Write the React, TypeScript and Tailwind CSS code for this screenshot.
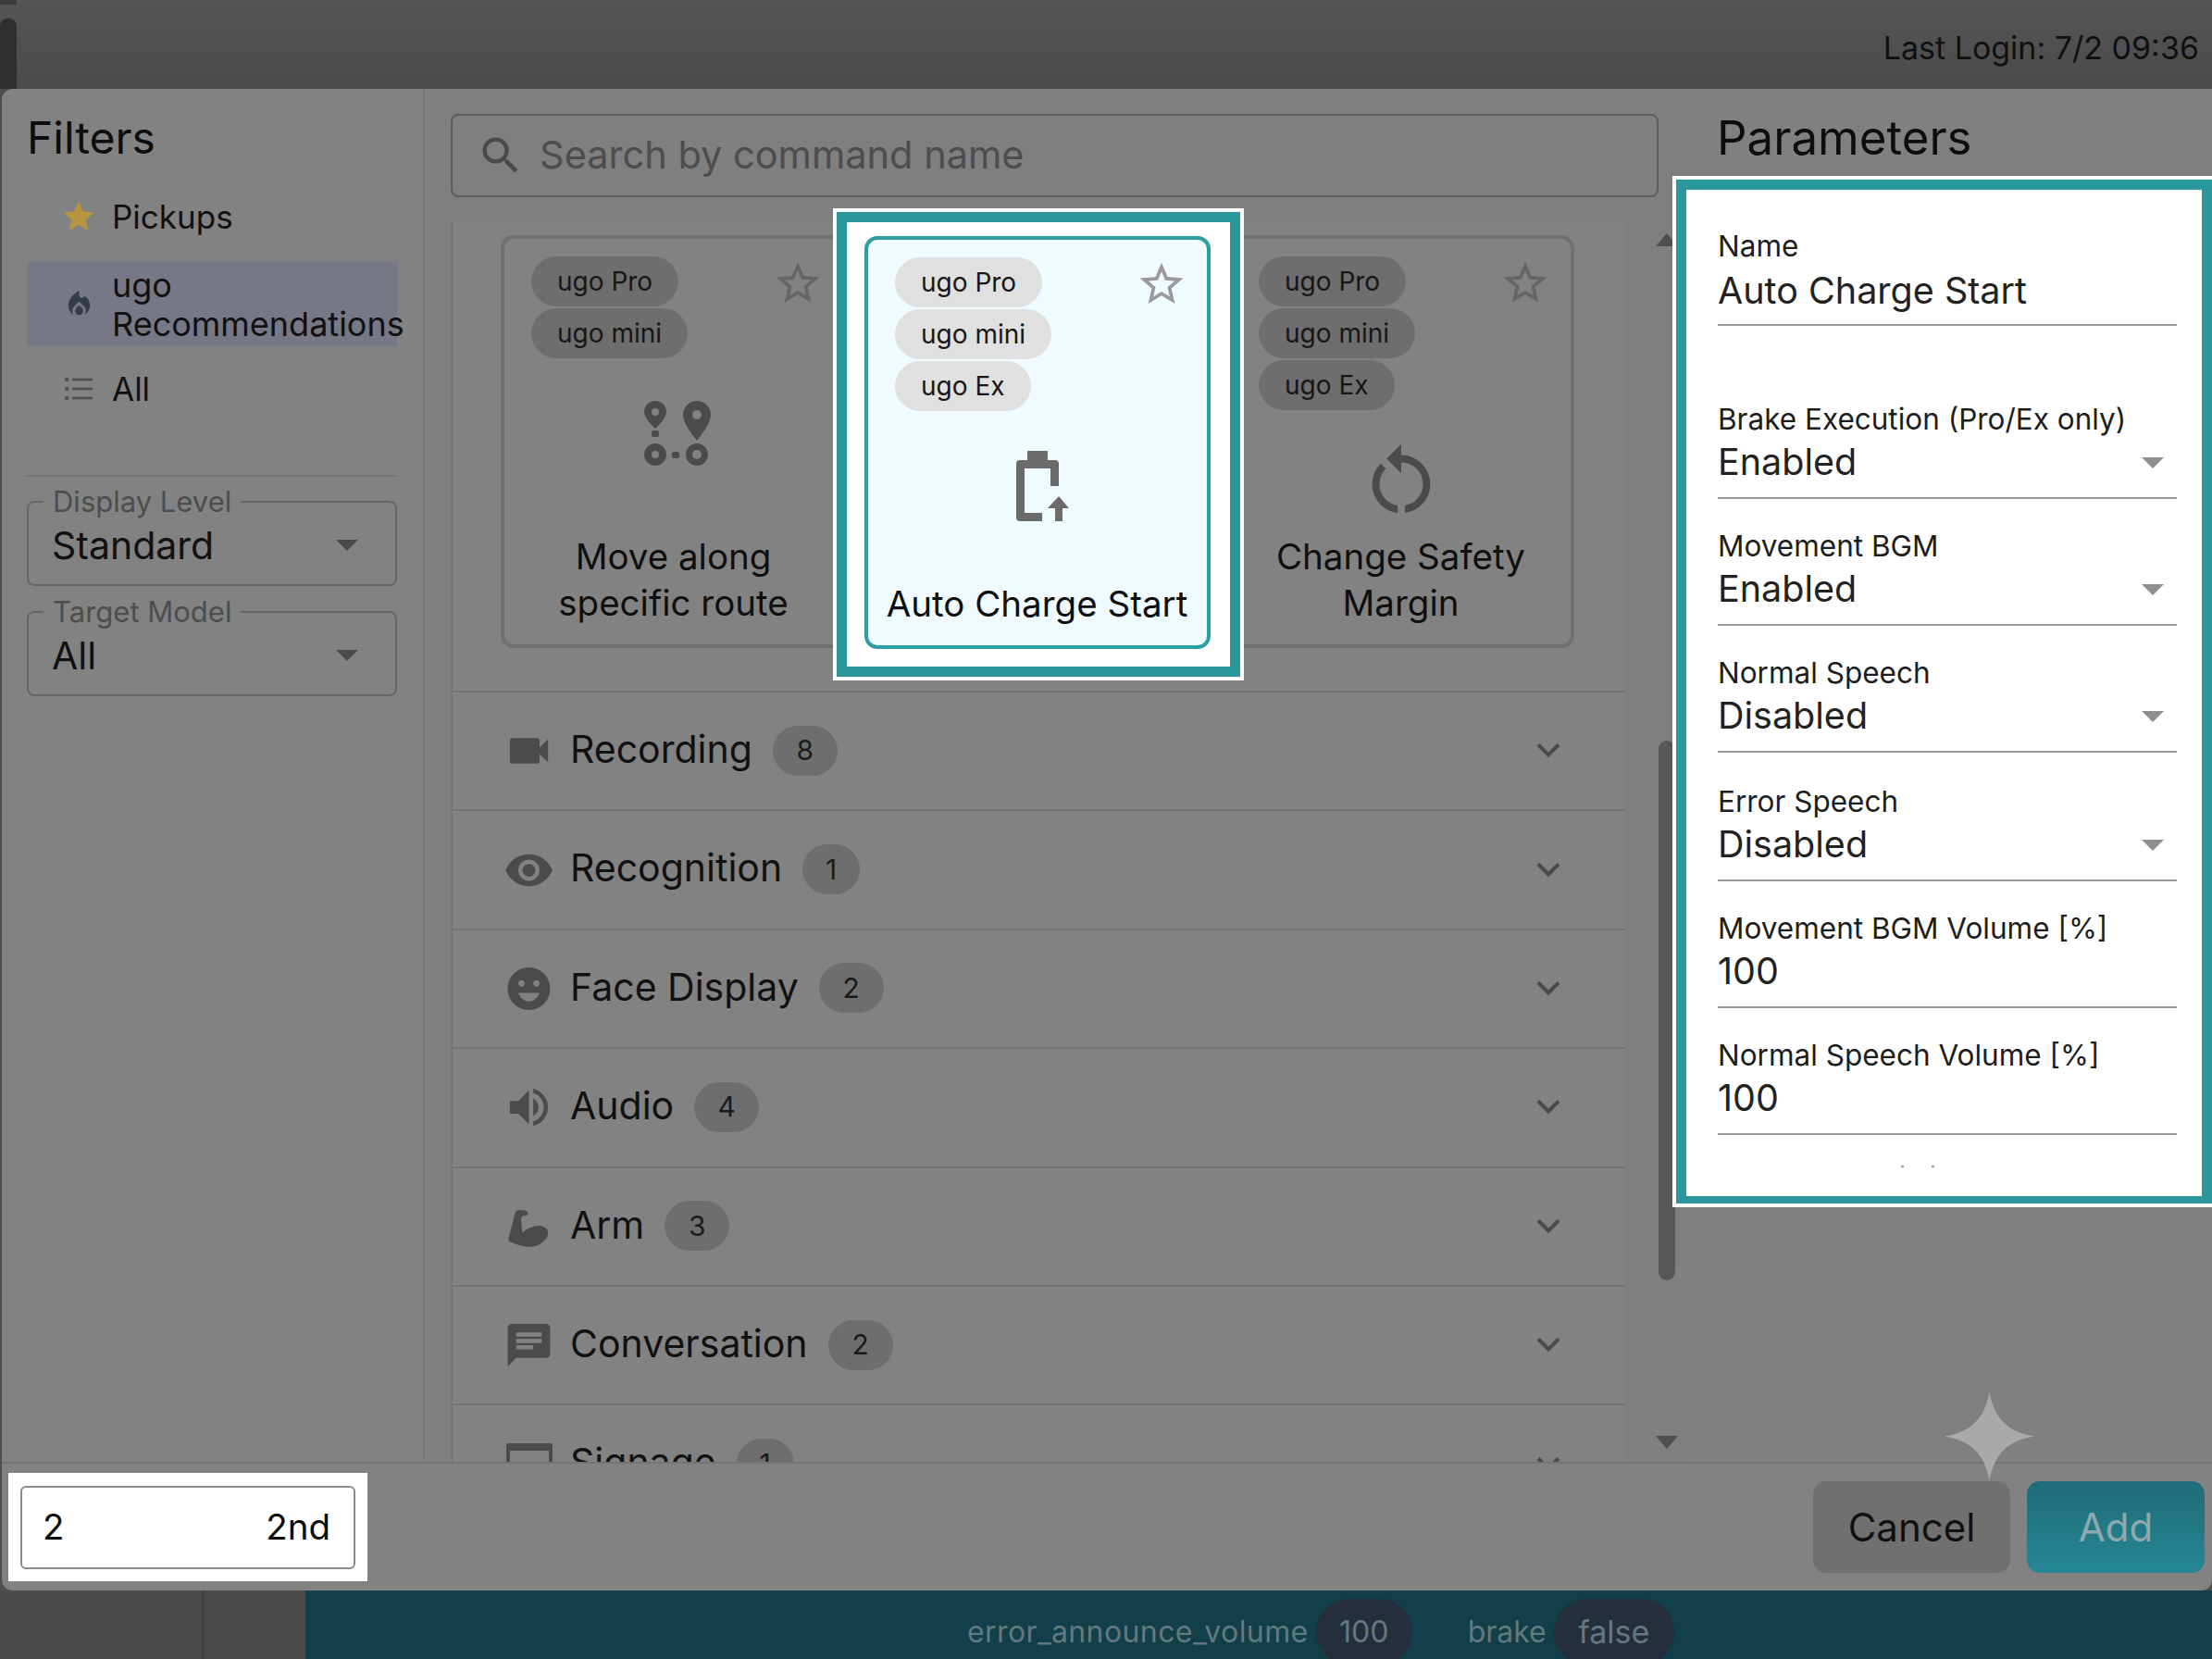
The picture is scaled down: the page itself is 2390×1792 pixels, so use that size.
import {
  MdChat,
  MdEmojiEmotions,
  MdKeyboardArrowDown,
  MdLocalFireDepartment,
  MdRestartAlt,
  MdSearch,
  MdStar,
  MdStarBorder,
  MdVideocam,
  MdVisibility,
  MdVolumeUp,
} from "react-icons/md";
import type { ReactNode } from "react";

function RouteIcon() {
  return (
    <svg width="72" height="72" viewBox="0 0 72 72" fill="#4b4b4b" fillRule="evenodd">
      <path d="M12 0a12 12 0 0 1 12 12c0 6-7 13-12 18C7 25 0 18 0 12A12 12 0 0 1 12 0Zm0 8a4 4 0 1 0 0 8 4 4 0 0 0 0-8Z" />
      <path d="M57 0a15 15 0 0 1 15 15c0 9-9 20-15 28-6-8-15-19-15-28A15 15 0 0 1 57 0Zm0 10a5 5 0 1 0 0 10 5 5 0 0 0 0-10Z" />
      <rect x="8" y="32" width="8" height="7" rx="2" />
      <rect x="30" y="55" width="8" height="7" rx="2" />
      <path d="M12 46a12 12 0 1 1 0 24 12 12 0 0 1 0-24Zm0 8a4 4 0 1 0 0 8 4 4 0 0 0 0-8Z" />
      <path d="M57 46a12 12 0 1 1 0 24 12 12 0 0 1 0-24Zm0 7a5 5 0 1 0 0 10 5 5 0 0 0 0-10Z" />
    </svg>
  );
}

function BatteryIcon() {
  return (
    <svg width="57" height="78" viewBox="0 0 57 78" fill="#6b6b6b">
      <path d="M12 0h22v10h8q4 0 4 4v24h-9V19H9v48h19v9H4q-4 0-4-4V14q0-4 4-4h8Z" />
      <path d="M46 49 57 62h-7v14h-8V62h-8Z" />
    </svg>
  );
}

function ArmIcon() {
  return (
    <svg width="55" height="55" viewBox="8.5 8.5 55 55" fill="#4b4b4b">
      <path d="M21 22Q22 18 27 18.5L32 19Q35 20 35 22 35 24 32 24.5L29.5 25Q27.5 26 27.5 30L29 43Q34 38 42 36 52 34 56 40 58 46 54 50 46 60 32 58 22 56 16 53 13.5 52 14 49Z" />
    </svg>
  );
}

function ListIcon() {
  return (
    <svg width="30" height="26" viewBox="0 0 30 26" fill="#505050">
      <circle cx="2.2" cy="3" r="2.2" />
      <circle cx="2.2" cy="13" r="2.2" />
      <circle cx="2.2" cy="23" r="2.2" />
      <rect x="8" y="1.7" width="22" height="2.6" />
      <rect x="8" y="11.7" width="22" height="2.6" />
      <rect x="8" y="21.7" width="22" height="2.6" />
    </svg>
  );
}

function Caret({ color }: { color: string }) {
  return <span className={`h-0 w-0 border-x-[12px] border-t-[12px] border-x-transparent ${color}`} />;
}

function SelectField({ label, value }: { label: string; value: string }) {
  return (
    <div className="relative flex h-[92px] items-center justify-between rounded-lg border-2 border-[#666666] pl-[25px] pr-[40px] pt-[4px]">
      <span className="absolute left-[16px] top-[-22px] bg-[#828282] px-[10px] text-[31px] leading-[42px] text-[#4d4d4d]">{label}</span>
      <span className="text-[41px] leading-[48px] text-[#111111]">{value}</span>
      <Caret color="border-t-[#4a4a4a]" />
    </div>
  );
}

function Chip({ text, light }: { text: string; light?: boolean }) {
  return (
    <span className={`flex h-[54px] w-fit items-center rounded-[27px] px-[28px] text-[28px] text-[#161616] ${light ? "bg-[#e0e0e0]" : "bg-[#6e6e6e]"}`}>
      {text}
    </span>
  );
}

function CardBody({
  chips,
  title,
  icon,
  iconBox,
  active,
}: {
  chips: string[];
  title: string[];
  icon: ReactNode;
  iconBox: string;
  active?: boolean;
}) {
  return (
    <div
      className={`flex h-[446px] w-[374px] shrink-0 flex-col rounded-[14px] border-[4px] pb-[20px] pl-[29px] pr-[30px] pt-[19px] ${
        active ? "border-[#2e9ea2] bg-[#effbff]" : "border-[#707070]"
      }`}
    >
      <div className="flex items-start justify-between">
        <div className="flex flex-col gap-[2px]">
          {chips.map((c) => (
            <Chip key={c} text={c} light={active} />
          ))}
        </div>
        <MdStarBorder className={`-mr-[9px] mt-[1px] shrink-0 ${active ? "text-[#9a9a9a]" : "text-[#656565]"}`} size={56} />
      </div>
      <div className={`flex justify-center ${iconBox}`}>{icon}</div>
      <div className="-mx-[30px] mt-auto text-center text-[38.5px] leading-[50px] text-[#0f0f0f]">
        {title.map((t) => (
          <div key={t}>{t}</div>
        ))}
      </div>
    </div>
  );
}

function CategoryRow({ icon, label, count }: { icon: ReactNode; label: string; count: number }) {
  return (
    <div className="flex h-[128.4px] shrink-0 items-center border-b-2 border-[#737373] pl-[55px] pr-[58px]">
      <span className="flex w-[55px] shrink-0 justify-center text-[#4b4b4b]">{icon}</span>
      <span className="-mt-[3px] ml-[17px] text-[41px] text-[#111111]">{label}</span>
      <span className={`-mt-[1px] ml-[22px] flex h-[54px] items-center justify-center rounded-[27px] bg-[#6e6e6e] text-[30px] text-[#1a1a1a] ${count === 1 ? "w-[62px]" : "w-[70px]"}`}>
        {count}
      </span>
      <MdKeyboardArrowDown className="-mt-[2px] ml-auto text-[#4a4a4a]" size={50} />
    </div>
  );
}

function ParamField({
  label,
  value,
  select,
  className = "",
  valueClass = "",
}: {
  label: string;
  value: string;
  select?: boolean;
  className?: string;
  valueClass?: string;
}) {
  return (
    <div className={`h-[106px] border-b-2 border-[#9a9a9a] ${className}`}>
      <div className="text-[31.5px] leading-[40px] text-[#1d1d1d]">{label}</div>
      <div className={`flex h-[54px] items-center justify-between pr-[14px] text-[39.5px] text-[#222222] ${valueClass}`}>
        <span>{value}</span>
        {select && <Caret color="border-t-[#8f8f8f]" />}
      </div>
    </div>
  );
}

export default function App() {
  return (
    <div className="relative flex h-[1792px] w-[2390px] flex-col overflow-hidden bg-[#4f4f4f] font-['Inter',sans-serif]">
      {/* top bar */}
      <div className="flex h-[96px] shrink-0 items-start justify-between bg-gradient-to-b from-[#555555] to-[#4b4b4b]">
        <div className="flex h-full w-[18px] flex-col justify-between">
          <div className="h-[5px] w-[18px] bg-[#3a3a3a]" />
          <div className="h-[76px] rounded-t-lg bg-[#2f2f2f]" />
        </div>
        <span className="mr-[14px] mt-[28px] text-[34px] leading-[48px] text-[#101010]">Last Login: 7/2 09:36</span>
      </div>

      {/* modal */}
      <div className="ml-[2px] flex h-[1622px] shrink-0 flex-col rounded-xl bg-[#828282]">
        <div className="flex h-[1483px] shrink-0">
          {/* filters */}
          <aside className="w-[457px] shrink-0 border-r-2 border-[#767676] pl-[27px] pr-[28px]">
            <h2 className="mt-[29px] text-[48px] font-normal leading-[48px] text-[#0d0d0d]">Filters</h2>
            <div className="mt-[33px] flex h-[56px] items-center">
              <span className="ml-[36px] flex w-[40px] justify-center">
                <MdStar className="shrink-0 text-[#b8953f]" size={40} />
              </span>
              <span className="ml-[16px] text-[35px] text-[#111111]">Pickups</span>
            </div>
            <div className="mt-[21px] flex h-[91px] items-center bg-[#767885]">
              <span className="ml-[36px] flex w-[40px] shrink-0 justify-center">
                <MdLocalFireDepartment className="shrink-0 text-[#363c4a]" size={35} />
              </span>
              <span className="ml-[16px] text-[36px] leading-[42px] text-[#111111]">
                ugo
                <br />
                Recommendations
              </span>
            </div>
            <div className="mt-[18px] flex h-[56px] items-center">
              <span className="ml-[36px] flex w-[40px] justify-center">
                <ListIcon />
              </span>
              <span className="ml-[16px] text-[35px] text-[#111111]">All</span>
            </div>
            <div className="mt-[65px] border-t-2 border-[#747474]" />
            <div className="mt-[26px]">
              <SelectField label="Display Level" value="Standard" />
            </div>
            <div className="mt-[27px]">
              <SelectField label="Target Model" value="All" />
            </div>
          </aside>

          {/* commands */}
          <main className="flex min-w-0 flex-1 flex-col bg-[#7f7f7f]">
            <div className="ml-[28px] mr-[30px] mt-[27px] flex h-[90px] shrink-0 items-center rounded-lg border-2 border-[#5c5c5c]">
              <MdSearch className="ml-[26px] text-[#4a4a4a]" size={52} />
              <span className="-mt-[2px] ml-[16px] text-[41.5px] text-[#4d4d4d]">Search by command name</span>
            </div>
            <div className="mt-[26px] flex min-h-0 flex-1">
              <div className="ml-[28px] flex w-[1269px] shrink-0 flex-col border-l-2 border-[#747474] bg-[#828282]">
                <div className="flex h-[509px] shrink-0 items-start gap-[19px] border-b-2 border-[#737373] pl-[52px] pt-[15px]">
                  <CardBody
                    chips={["ugo Pro", "ugo mini"]}
                    title={["Move along", "specific route"]}
                    icon={<RouteIcon />}
                    iconBox="mt-[46px] pl-[8px]"
                  />
                  {/* highlighted card: white and teal frame sits over its neighbours */}
                  <div className="relative z-10 -mb-[33px] -ml-[34px] -mr-[36px] -mt-[29px] shrink-0 border-[4px] border-white">
                    <div className="border-[11px] border-[#2a979c] bg-white pb-[19px] pl-[19px] pr-[21px] pt-[15px]">
                      <CardBody
                        active
                        chips={["ugo Pro", "ugo mini", "ugo Ex"]}
                        title={["Auto Charge Start"]}
                        icon={<BatteryIcon />}
                        iconBox="mt-[43px] pl-[12px]"
                      />
                    </div>
                  </div>
                  <CardBody
                    chips={["ugo Pro", "ugo mini", "ugo Ex"]}
                    title={["Change Safety", "Margin"]}
                    icon={<MdRestartAlt className="text-[#4b4b4b]" size={94} />}
                    iconBox="mt-[29px]"
                  />
                </div>
                <div className="flex min-h-0 flex-1 flex-col overflow-hidden">
                  <CategoryRow icon={<MdVideocam size={56} />} label="Recording" count={8} />
                  <CategoryRow icon={<MdVisibility size={56} />} label="Recognition" count={1} />
                  <CategoryRow icon={<MdEmojiEmotions size={56} />} label="Face Display" count={2} />
                  <CategoryRow icon={<MdVolumeUp size={56} />} label="Audio" count={4} />
                  <CategoryRow icon={<ArmIcon />} label="Arm" count={3} />
                  <CategoryRow icon={<MdChat size={56} />} label="Conversation" count={2} />
                  <CategoryRow
                    icon={<span className="h-[46px] w-[50px] rounded-[2px] border-[4px] border-t-[8px] border-[#4b4b4b]" />}
                    label="Signage"
                    count={1}
                  />
                </div>
              </div>
              {/* scrollbar */}
              <div className="flex w-[62px] flex-col items-center pl-[28px] pt-[13px]">
                <span className="h-0 w-0 border-x-[12px] border-b-[14px] border-x-transparent border-b-[#4f4f4f]" />
                <div className="mt-[534px] h-[583px] w-[18px] shrink-0 rounded-full bg-[#585858]" />
                <span className="mt-[168px] h-0 w-0 border-x-[12px] border-t-[14px] border-x-transparent border-t-[#4f4f4f]" />
              </div>
            </div>
          </main>

          {/* parameters */}
          <aside className="relative z-20 w-[568px] shrink-0 bg-[#808080]">
            <h2 className="ml-[33px] mt-[29px] text-[51px] font-normal leading-[48px] text-[#0d0d0d]">Parameters</h2>
            <div className="-ml-[15px] mt-[17px] h-[1114px] w-[585px] border-[4px] border-r-[2px] border-white">
              <div className="flex h-full flex-col border-[11px] border-b-[8px] border-[#2a979c] bg-white pl-[34px] pr-[27px] pt-[41px]">
                <ParamField label="Name" value="Auto Charge Start" valueClass="mt-[2px]" />
                <ParamField className="mt-[81px]" label="Brake Execution (Pro/Ex only)" value="Enabled" select />
                <ParamField className="mt-[31px]" label="Movement BGM" value="Enabled" select />
                <ParamField className="mt-[31px]" label="Normal Speech" value="Disabled" select />
                <ParamField className="mt-[33px]" label="Error Speech" value="Disabled" select />
                <ParamField className="mt-[31px]" label="Movement BGM Volume [%]" value="100" />
                <ParamField className="mt-[31px]" label="Normal Speech Volume [%]" value="100" />
                <div className="ml-[198px] mt-[33px] flex gap-[30px]">
                  <span className="h-[2px] w-[3px] bg-[#9a9a9a]" />
                  <span className="h-[2px] w-[3px] bg-[#9a9a9a]" />
                </div>
              </div>
            </div>
          </aside>
        </div>

        {/* footer */}
        <div className="flex min-h-0 flex-1 items-start justify-between border-t-2 border-[#747474]">
          <div className="ml-[7px] mt-[10px] h-[117px] w-[388px] bg-white px-[13px] pt-[14px]">
            <div className="flex h-[90px] items-center justify-between rounded-md border-2 border-[#8a8a8a] pl-[22px] pr-[25px] text-[38.5px] text-[#0c0c0c]">
              <span>2</span>
              <span>2nd</span>
            </div>
          </div>
          <div className="mr-[8px] mt-[19px] flex gap-[18px]">
            <div className="flex h-[99px] w-[213px] items-center justify-center rounded-[14px] bg-[#707070] text-[42px] text-[#101010]">Cancel</div>
            <div className="flex h-[99px] w-[192px] items-center justify-center rounded-[14px] bg-gradient-to-b from-[#1f6c78] to-[#268794] text-[42px] text-[#8fa9ae]">Add</div>
          </div>
        </div>
      </div>

      {/* behind the dialog */}
      <div className="flex min-h-0 flex-1 bg-[#4a4a4a]">
        <div className="w-[220px] shrink-0 border-r-2 border-[#3d3d3d]" />
        <div className="w-[110px] shrink-0" />
        <div className="flex flex-1 items-start gap-[8px] bg-[#123f4a] pl-[715px] pt-[9px] text-[32px] leading-[72px] text-[#64797f]">
          <span className="tracking-[0.4px]">error_announce_volume</span>
          <span className="flex h-[72px] w-[104px] shrink-0 items-center justify-center rounded-[36px] bg-[#252e3d]">100</span>
          <span className="ml-[52px]">brake</span>
          <span className="flex h-[72px] w-[130px] shrink-0 items-center justify-center rounded-[36px] bg-[#252e3d] text-[34px]">false</span>
        </div>
      </div>

      {/* watermark */}
      <svg className="absolute left-[2100px] top-[1503px] z-30" width="99" height="97" viewBox="0 0 100 100" fill="#a9a9a9">
        <path d="M50 0C55 30 70 45 100 50 70 55 55 70 50 100 45 70 30 55 0 50 30 45 45 30 50 0Z" />
      </svg>
    </div>
  );
}
